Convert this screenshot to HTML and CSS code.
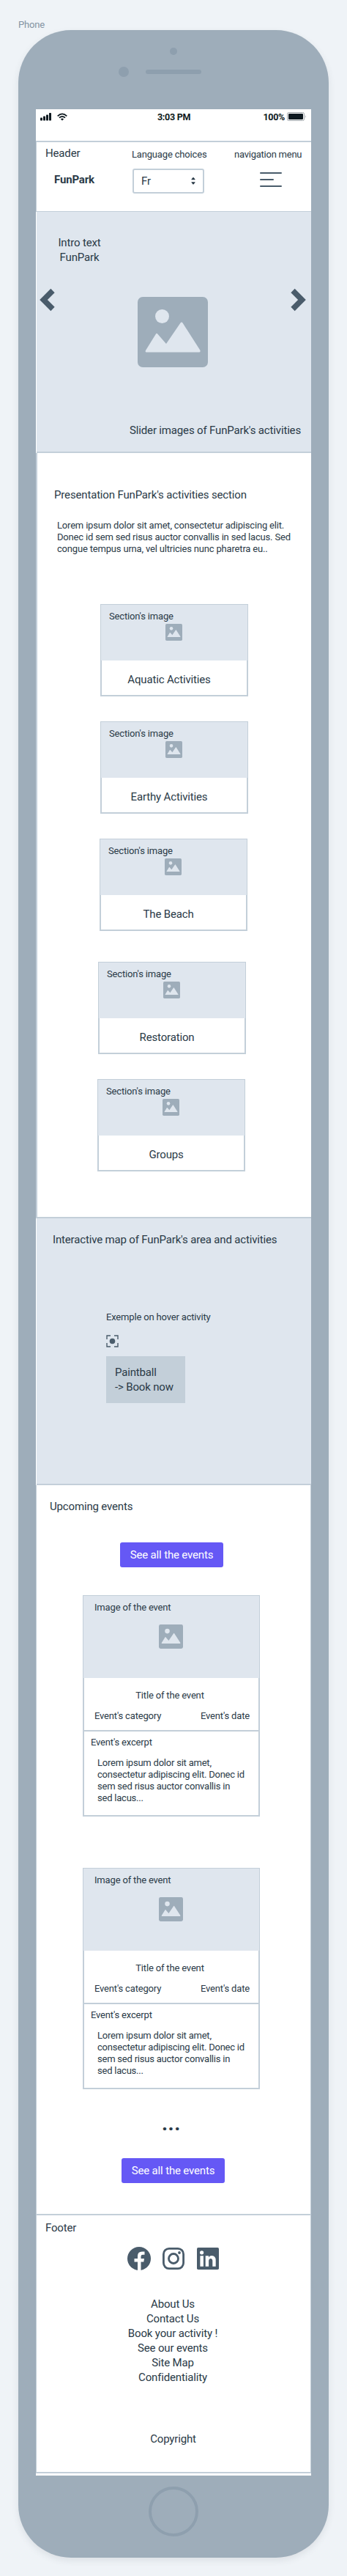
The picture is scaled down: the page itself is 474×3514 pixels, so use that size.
FILE: index.html
```html
<!DOCTYPE html>
<html lang="en">
<head>
<meta charset="utf-8">
<title>FunPark - Phone</title>
<link rel="stylesheet" href="styles.css">
</head>
<body>
<svg class="defs" width="0" height="0" aria-hidden="true">
  <symbol id="picture" viewBox="0 0 96 96">
    <rect width="96" height="96" rx="7" fill="#9eadba"/>
    <circle cx="33.500" cy="26.500" r="9.500" fill="#dfe6ee"/>
    <path d="M11 73 25 50.500Q26 49 27.200 50.500L39 64 58.500 35.500Q60 33.500 61.500 35.500L85.500 73Q86 75.500 84 75.500H12Q10 75.500 11 73Z" fill="#dfe6ee"/>
  </symbol>
</svg>
<div class="phone-label small">Phone</div>
<div class="phone">
  <div class="bezel-top">
    <span class="camera"></span>
    <div class="speaker-row"><span class="sensor"></span><span class="speaker"></span></div>
  </div>
  <main class="screen">
    <div class="status">
      <div class="status-left">
        <svg width="15" height="11" viewBox="0 0 15 11" fill="#0e1920"><rect y="6.500" width="3" height="4" rx=".8"/><rect x="4" y="4.500" width="3" height="6" rx=".8"/><rect x="8" y="2.500" width="3" height="8" rx=".8"/><rect x="12" y="0" width="3" height="10.500" rx=".8"/></svg>
        <svg width="14" height="11" viewBox="0 0 14 11" fill="none" stroke="#0e1920" stroke-width="1.800"><path d="M.7 4.300Q7-1.600 13.300 4.300M3 6.700Q7 3 11 6.700"/><path d="M4.900 8.400Q7 6.600 9.100 8.400L7 10.500Z" fill="#0e1920" stroke="none"/></svg>
      </div>
      <span class="clock">3:03 PM</span>
      <div class="battery"><span>100%</span>
        <svg width="27" height="12" viewBox="0 0 27 12"><rect x=".5" y=".5" width="23" height="11" rx="2" fill="#fff" stroke="#a0a6aa"/><rect x="2" y="2" width="20" height="8" rx="1" fill="#0e1920"/><path d="M25 4Q26.700 6 25 8Z" fill="#a0a6aa"/></svg>
      </div>
    </div>

    <header class="header">
      <div class="brand"><div class="header-title">Header</div><strong>FunPark</strong></div>
      <div class="language"><div class="small">Language choices</div>
        <div class="select"><span>Fr</span><svg width="6" height="10" viewBox="0 0 6 10" fill="#2a3a47"><path d="M.8 3.300H5.200Q6 3.300 5.400 2.400L3.700.3Q3 -.2 2.300.3L.6 2.400Q0 3.300 .8 3.300ZM.8 6.200H5.200Q6 6.200 5.400 7.100L3.700 9.200Q3 9.700 2.300 9.200L.6 7.100Q0 6.200 .8 6.200Z"/></svg></div>
      </div>
      <div class="nav"><div class="small">navigation menu</div>
        <div class="burger"><i></i><i></i><i></i></div>
      </div>
    </header>

    <section class="slider">
      <p class="intro">Intro text<br>FunPark</p>
      <div class="slides">
        <svg class="arrow" width="21" height="32" viewBox="0 0 21 32"><path d="M18 3.500 5.500 16 18 28.500" fill="none" stroke="#4a5c6b" stroke-width="7.500"/></svg>
        <svg class="hero" width="96" height="96"><use href="#picture"/></svg>
        <svg class="arrow" width="21" height="32" viewBox="0 0 21 32"><path d="M3 3.500 15.500 16 3 28.500" fill="none" stroke="#4a5c6b" stroke-width="7.500"/></svg>
      </div>
      <p class="caption">Slider images of FunPark's activities</p>
    </section>

    <section class="presentation">
      <h2>Presentation FunPark's activities section</h2>
      <p class="small lead">Lorem ipsum dolor sit amet, consectetur adipiscing elit. <br>Donec id sem sed risus auctor convallis in sed lacus. Sed <br>congue tempus urna, vel ultricies nunc pharetra eu..</p>
      <article class="activity aquatic"><div class="thumb small">Section's image<svg width="23" height="23"><use href="#picture"/></svg></div><h3>Aquatic Activities</h3></article>
      <article class="activity earthy"><div class="thumb small">Section's image<svg width="23" height="23"><use href="#picture"/></svg></div><h3>Earthy Activities</h3></article>
      <article class="activity beach"><div class="thumb small">Section's image<svg width="23" height="23"><use href="#picture"/></svg></div><h3>The Beach</h3></article>
      <article class="activity restoration"><div class="thumb small">Section's image<svg width="23" height="23"><use href="#picture"/></svg></div><h3>Restoration</h3></article>
      <article class="activity groups"><div class="thumb small">Section's image<svg width="23" height="23"><use href="#picture"/></svg></div><h3>Groups</h3></article>
    </section>

    <section class="map">
      <h2>Interactive map of FunPark's area and activities</h2>
      <div class="place">
        <p class="small">Exemple on hover activity</p>
        <svg width="17" height="17" viewBox="0 0 17 17"><path d="M1 6V1H6M11 1H16V6M16 11V16H11M6 16H1V11" fill="none" stroke="#4a5c6b" stroke-width="1.400"/><circle cx="8.500" cy="8.500" r="3.800" fill="#4a5c6b"/></svg>
        <div class="tip">Paintball<br>-&gt; Book now</div>
      </div>
    </section>

    <section class="events">
      <h2>Upcoming events</h2>
      <a class="button">See all the events</a>
      <article class="event small">
        <div class="cover">Image of the event<svg width="33" height="33"><use href="#picture"/></svg></div>
        <div class="info"><h3>Title of the event</h3><div class="meta"><span>Event's category</span><span>Event's date</span></div></div>
        <div class="excerpt">Event's excerpt<p>Lorem ipsum dolor sit amet,<br>consectetur adipiscing elit. Donec id<br>sem sed risus auctor convallis in<br>sed lacus...</p></div>
      </article>
      <article class="event small">
        <div class="cover">Image of the event<svg width="33" height="33"><use href="#picture"/></svg></div>
        <div class="info"><h3>Title of the event</h3><div class="meta"><span>Event's category</span><span>Event's date</span></div></div>
        <div class="excerpt">Event's excerpt<p>Lorem ipsum dolor sit amet,<br>consectetur adipiscing elit. Donec id<br>sem sed risus auctor convallis in<br>sed lacus...</p></div>
      </article>
      <div class="more">...</div>
      <a class="button last">See all the events</a>
    </section>

    <footer class="footer">
      <h2>Footer</h2>
      <div class="social">
        <svg width="32" height="32" viewBox="0 0 32 32"><circle cx="16" cy="16" r="16" fill="#4a5c6b"/><path d="M14 32V20.500H9.500V16H14V12.500Q14 6.500 20 6.500H23.500V10.700H21Q18.500 10.700 18.500 13V16H23L22.300 20.500H18.500V32Z" fill="#fff"/></svg>
        <svg width="30" height="30" viewBox="0 0 30 30" fill="none" stroke="#4a5c6b" stroke-width="2.800"><rect x="1.400" y="1.400" width="27.200" height="27.200" rx="7.500"/><circle cx="15" cy="15" r="6.500"/><circle cx="23" cy="7" r="1.900" fill="#4a5c6b" stroke="none"/></svg>
        <svg width="30" height="30" viewBox="0 0 30 30"><rect width="30" height="30" rx="1.800" fill="#4a5c6b"/><circle cx="6.600" cy="6.800" r="2.600" fill="#fff"/><path d="M4.400 11.300H8.900V25.700H4.400ZM11.700 11.300H16V13.300Q17.300 11 20.300 11 25.700 11 25.700 17.500V25.700H21.300V18.500Q21.300 15 18.800 15 16.100 15 16.100 18.500V25.700H11.700Z" fill="#fff"/></svg>
      </div>
      <nav class="links"><a>About Us</a><a>Contact Us</a><a>Book your activity !</a><a>See our events</a><a>Site Map</a><a>Confidentiality</a></nav>
      <p class="copyright">Copyright</p>
    </footer>
  </main>
  <div class="home"></div>
</div>
</body>
</html>
```
FILE: styles.css
```css
* { box-sizing: border-box; }
body {
  margin: 0;
  height: 3514px;
  padding: 26px 25px 0;
  background: #eff3f7;
  color: #2a3a47;
  font: 15px/20px Roboto, "Liberation Sans", sans-serif;
  letter-spacing: -.16px;
  overflow: hidden;
}
h2, h3, p { margin: 0; font: inherit; }
svg { display: block; flex: none; }
.defs { position: absolute; }
.small { font-size: 13px; line-height: 16px; letter-spacing: -.17px; white-space: nowrap; }
.phone-label { height: 15px; color: #8494a3; }

/* Device frame */
.phone { height: 3448px; padding: 0 24px; border-radius: 72px; background: #9eadba; box-shadow: 0 4px 10px rgba(60, 70, 80, .1); }
.bezel-top { height: 108px; padding-top: 24px; }
.camera { display: block; width: 10px; height: 10px; margin: 0 auto; border-radius: 50%; background: #8e9fae; }
.speaker-row { display: flex; align-items: center; gap: 23px; margin: 16px 0 0 113px; }
.sensor { width: 14px; height: 14px; border-radius: 50%; background: #8e9fae; }
.speaker { width: 76px; height: 6px; border-radius: 3px; background: #8e9fae; }
.screen { height: 3228px; background: #fff; }
.home { width: 68px; height: 68px; margin: 15px auto 0; border: 4px solid #8e9fae; border-radius: 50%; }

/* Status bar */
.status { display: grid; grid-template-columns: 160px 1fr auto; height: 43px; padding: 2px 6px 0; color: #0e1920; font-size: 12.5px; font-weight: 700; line-height: 16px; letter-spacing: -.3px; }
.status-left { display: flex; gap: 8px; padding-top: 3px; }
.clock { padding-top: 1px; }
.battery { display: flex; gap: 3px; padding-top: 1px; }
.battery svg { margin-top: 1px; }

/* Header */
.header { display: grid; grid-template-columns: 118px 140px 1fr; height: 97px; border: solid #c3cfd9; border-width: 2px 0 1px 1px; padding: 5px 0 0 12px; }
.brand strong { display: block; margin: 16px 0 0 12px; }
.language, .nav { padding-top: 4px; }
.nav .small { letter-spacing: -.24px; }
.select { display: flex; align-items: center; justify-content: space-between; width: 98px; height: 34px; margin: 11px 0 0 1px; padding: 0 10px; border: 2px solid #c3cfd9; border-radius: 3px; }
.burger { display: grid; gap: 7px; width: 30px; margin: 16px 0 0 35px; }
.burger i { height: 2px; border-radius: 1px; background: #4a5c6b; }
.burger i:nth-child(2) { width: 19px; }

/* Slider */
.slider { height: 329px; border: solid #c3cfd9; border-width: 0 0 2px; margin-left: 1px; padding-top: 32px; background: #dfe6ee; }
.intro { width: 117px; text-align: center; }
.slides { display: flex; justify-content: space-between; height: 111px; margin-top: 32px; padding: 0 7px 0 4px; }
.hero { margin-top: 12px; }
.caption { margin-top: 73px; text-align: right; padding-right: 14px; }

/* Activities */
.presentation { height: 1044px; border: solid #c3cfd9; border-width: 0 0 2px 2px; padding-top: 47px; }
.presentation h2 { margin-left: 23px; }
.lead { margin: 24px 0 0 27px; letter-spacing: -.18px; }
.activity { width: 202px; height: 126px; margin: 34px 0 0 86px; }
.activity.aquatic { margin-top: 67px; }
.activity.beach { margin-left: 85px; }
.activity.restoration { margin: 42px 0 0 83px; }
.activity.groups { margin-left: 82px; }
.thumb { height: 77px; padding: 8px 0 0 11px; border: solid #c3cfd9; border-width: 1px 1px 0; background: #dfe6ee; }
.thumb svg { margin: 2px 0 0 77px; }
.activity h3 { height: 49px; padding: 16px 14px 0 0; border: solid #c3cfd9; border-width: 0 2px 2px; text-align: center; }

/* Map */
.map { height: 364px; margin-left: 1px; padding-top: 19px; border-bottom: 2px solid #c3cfd9; background: #dfe6ee; }
.map h2 { margin-left: 22px; }
.place { margin: 88px 0 0 95px; }
.place svg { margin-top: 16px; }
.tip { width: 108px; height: 64px; margin-top: 12px; padding: 12px; background: #c3cfd9; white-space: nowrap; }

/* Events */
.events { height: 996px; padding: 19px 0 0; border: solid #c3cfd9; border-width: 0 1px 2px; }
.events h2 { margin-left: 18px; }
.button { display: block; width: 141px; height: 34px; margin: 39px 0 0 114px; padding-top: 7px; border-radius: 3px; background: #6558f5; color: #fff; text-align: center; }
.event { width: 242px; height: 302px; margin: 38px 0 0 63px; }
.event + .event { margin-top: 70px; }
.cover { height: 113px; padding: 8px 0 0 15px; border: solid #c3cfd9; border-width: 1px 1px 0; background: #dfe6ee; }
.cover svg { margin: 15px 0 0 88px; }
.info { height: 73px; padding: 16px 12px 0 14px; border: solid #c3cfd9; border-width: 0 2px 2px; }
.info h3 { text-align: center; padding-right: 6px; }
.meta { display: flex; justify-content: space-between; margin-top: 12px; }
.excerpt { height: 116px; padding: 7px 0 0 9px; border: solid #c3cfd9; border-width: 0 2px 2px; }
.excerpt p { margin: 12px 0 0 9px; letter-spacing: -.22px; }
.more { height: 20px; margin-top: 37px; padding-left: 171px; font-size: 28px; font-weight: 700; letter-spacing: .5px; }
.button.last { margin: 37px 0 0 116px; }

/* Footer */
.footer { height: 352px; padding-top: 7px; border: solid #c3cfd9; border-width: 0 1px 2px; }
.footer h2 { margin-left: 12px; }
.social { display: flex; align-items: center; margin: 16px 0 0 124px; }
.social svg + svg { margin-left: 16px; }
.social svg:last-child { margin-left: 17px; }
.links { display: grid; width: 372px; margin-top: 36px; text-align: center; }
.copyright { width: 373px; margin-top: 64px; text-align: center; }
```
